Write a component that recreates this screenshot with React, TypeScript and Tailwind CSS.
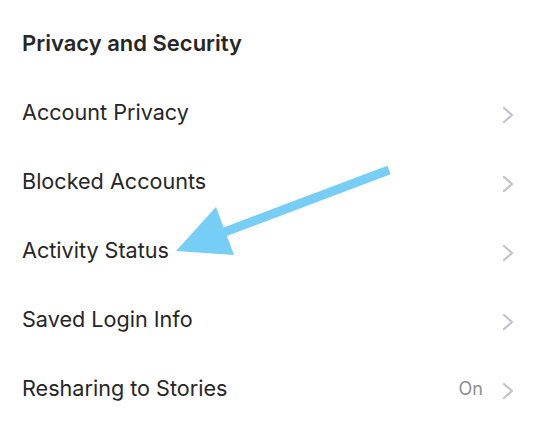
const rows = [
  { label: "Account Privacy" },
  { label: "Blocked Accounts" },
  { label: "Activity Status" },
  { label: "Saved Login Info" },
  { label: "Resharing to Stories", value: "On" },
];

const Chevron = () => (
  <svg width="12" height="16" viewBox="0 0 12 16" className="mt-[5px]">
    <polyline
      points="2,1 10,8 2,15"
      fill="none"
      stroke="#c4c4c8"
      strokeWidth="2.2"
      strokeLinecap="round"
      strokeLinejoin="round"
    />
  </svg>
);

export default function App() {
  return (
    <div
      className="relative w-[536px] h-[434px] bg-white overflow-hidden pt-[9px] text-[#262626]"
      style={{ fontFamily: "Inter, 'Liberation Sans', sans-serif" }}
    >
      <div className="h-[69px] flex items-center pl-[22px] text-[22px] font-semibold">
        Privacy and Security
      </div>
      {rows.map((r) => (
        <div key={r.label} className="h-[69px] flex items-center pl-[22px] pr-[22px]">
          <span className="flex-1 text-[21.6px]">{r.label}</span>
          {r.value && <span className="text-[18px] text-[#8e8e8e] mr-[19px]">{r.value}</span>}
          <Chevron />
        </div>
      ))}

      <svg className="absolute left-0 top-0" width="536" height="434" viewBox="0 0 536 434">
        <line x1="389" y1="170" x2="222" y2="233" stroke="#76cdf5" strokeWidth="9" />
        <polygon points="176,251 216,207 234,255" fill="#76cdf5" />
      </svg>
    </div>
  );
}
